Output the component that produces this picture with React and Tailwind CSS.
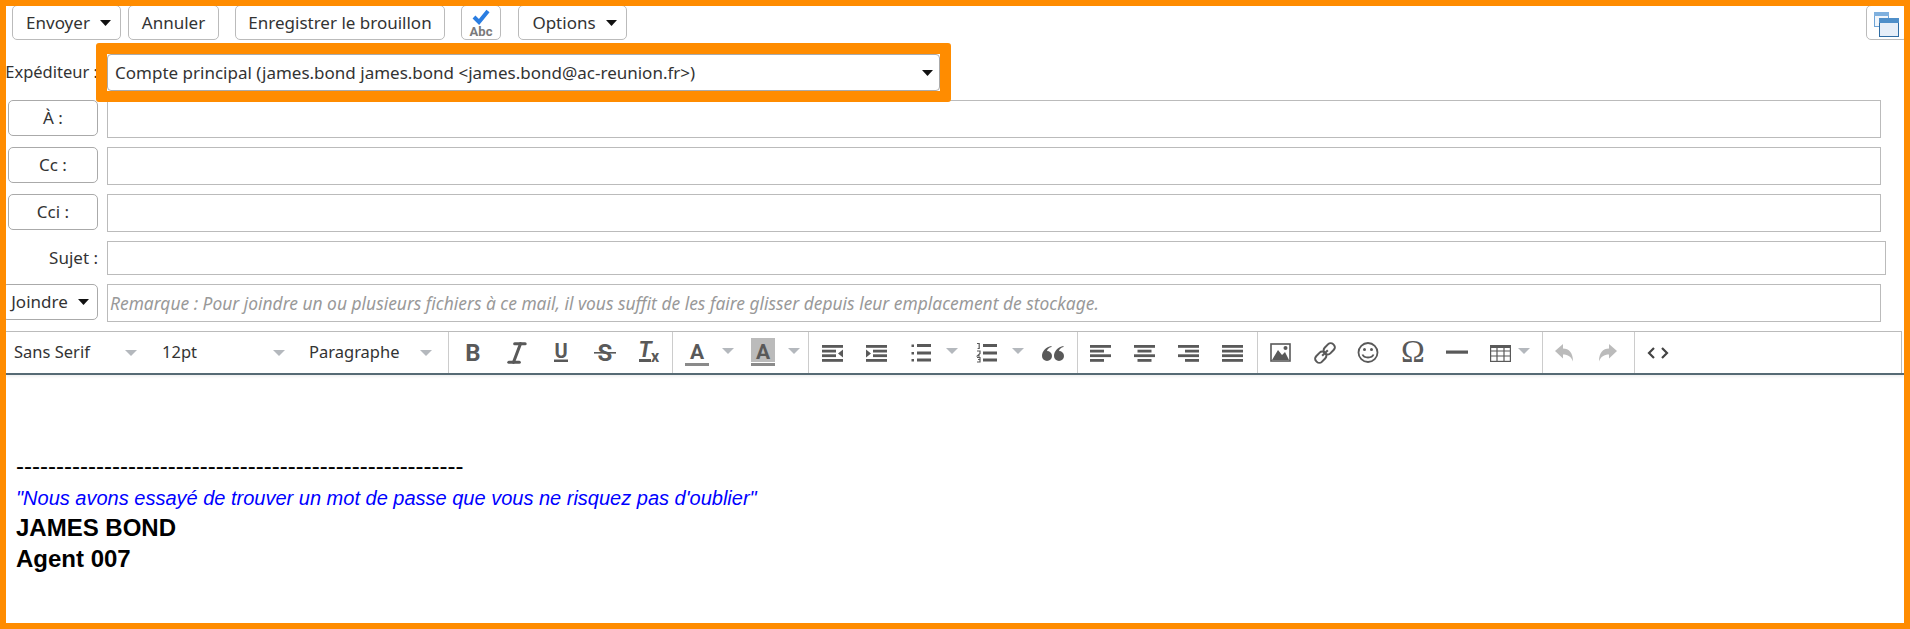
import { Italic } from 'lucide-react'

const INK = '#595959'

function Caret({ color = '#b4b8bd', w = 12, h = 6 }) {
  return (
    <svg width={w} height={h} viewBox="0 0 12 6" preserveAspectRatio="none" className="shrink-0">
      <polygon points="0,0 12,0 6,6" fill={color} />
    </svg>
  )
}

function TopButton({ w, children, className = '' }) {
  return (
    <button className={`${w} ${className} h-[35px] shrink-0 flex items-center justify-center gap-[10px] border border-[#bbbbbb] rounded-[5px] bg-white text-[#333] text-[17px] whitespace-nowrap`}>
      {children}
    </button>
  )
}

function FieldButton({ children }) {
  return (
    <button className="w-[90px] h-[36px] ml-[2px] shrink-0 border border-[#aaaaaa] rounded-[5px] bg-white text-[#333] text-[17px] flex items-center justify-center">
      {children}
    </button>
  )
}

function Row({ label, right = 'mr-[23px]', h = 'h-[38px]', placeholder }) {
  return (
    <div className="flex items-start">
      <div className="w-[92px] shrink-0">{label}</div>
      <div className={`ml-[9px] flex-1 ${h} ${right} border border-[#bbbbbb] flex items-center pl-[2px] italic text-[#999] text-[17.4px]`}>
        {placeholder}
      </div>
    </div>
  )
}

function Drop({ w, pr, children }) {
  return (
    <div className={`${w} ${pr} shrink-0 pl-[8px] flex items-center justify-between text-[#333] text-[16.5px] h-full`}>
      <span>{children}</span>
      <Caret />
    </div>
  )
}

function Group({ className, children }) {
  return <div className={`flex h-full border-l border-[#cccccc] ${className}`}>{children}</div>
}

function Ico({ children }) {
  return (
    <div className="w-[44px] h-full shrink-0 flex justify-center pt-[10px]">
      <svg width="22" height="22" viewBox="0 0 22 22" fill={INK} className="overflow-visible">{children}</svg>
    </div>
  )
}

function CaretBox({ className = '' }) {
  return (
    <div className={`w-[22px] h-full shrink-0 pl-[3px] pt-[16px] ${className}`}>
      <Caret />
    </div>
  )
}

const bars = [3, 7.7, 12.3, 17]

function Align({ rows }) {
  return (
    <Ico>
      {rows.map(([x, w], i) => (
        <rect key={i} x={x} y={bars[i]} width={w} height="2.8" />
      ))}
    </Ico>
  )
}

const quote = 'M9.5 4C4 5 0 9 0 14a5 5 0 0 0 10 0a5 5 0 0 0-5-5c.5-2 2-3.5 4.5-4z'
const arrow = 'M1 9l8-7v4.5c6 0 10 4 10 13c-2-5-5-7-10-7v4z'

function Toolbar() {
  return (
    <div className="border-b-2 border-[#566a74] shadow-[0_2px_2px_#f2f2f2]">
      <div className="mr-[2px] h-[42px] flex border-t border-r border-[#bbbbbb]">
        <Drop w="w-[148px]" pr="pr-[17px]">Sans Serif</Drop>
        <Drop w="w-[147px]" pr="pr-[16px]">12pt</Drop>
        <Drop w="w-[147px]" pr="pr-[16px]">Paragraphe</Drop>

        <Group className="pl-[2px] pr-[1px]">
          <Ico>
            <text x="11" y="19" textAnchor="middle" fontFamily="Roboto" fontWeight="700" fontSize="24">B</text>
          </Ico>
          <div className="w-[44px] h-full shrink-0 flex justify-center pt-[7px]">
            <Italic size={28} color={INK} strokeWidth={2.6} />
          </div>
          <Ico>
            <text x="11" y="16" textAnchor="middle" fontFamily="Roboto" fontWeight="700" fontSize="20">U</text>
            <rect x="4" y="17.5" width="14" height="2.5" />
          </Ico>
          <Ico>
            <text x="11" y="19" textAnchor="middle" fontFamily="Roboto" fontWeight="700" fontSize="24">S</text>
            <rect x="0" y="10" width="22" height="1.6" />
          </Ico>
          <Ico>
            <text x="7" y="15" textAnchor="middle" fontFamily="Roboto" fontWeight="700" fontStyle="italic" fontSize="22">T</text>
            <rect x="1" y="17" width="12" height="3" />
            <text x="17" y="20" textAnchor="middle" fontFamily="Roboto" fontWeight="700" fontSize="16">x</text>
          </Ico>
        </Group>

        <Group className="pl-[2px] pr-[1px]">
          <Ico>
            <text x="11" y="17" textAnchor="middle" fontFamily="Roboto" fontWeight="700" fontSize="21">A</text>
            <rect x="-1" y="21" width="24" height="3" fill="#8a8a8a" />
          </Ico>
          <CaretBox />
          <Ico>
            <rect x="-1" y="-4" width="24" height="24" fill="#bbbbbb" />
            <text x="11" y="17" textAnchor="middle" fontFamily="Roboto" fontWeight="700" fontSize="21">A</text>
            <rect x="-1" y="21" width="24" height="3" fill="#8a8a8a" />
          </Ico>
          <CaretBox />
        </Group>

        <Group className="pl-[2px] pr-[2px]">
          <Ico>
            <rect x="0" y="3" width="21" height="2.8" />
            <rect x="0" y="7.7" width="14" height="2.8" />
            <rect x="0" y="12.3" width="14" height="2.8" />
            <rect x="0" y="17" width="21" height="2.8" />
            <polygon points="21,7.5 16,11.5 21,15.5" />
          </Ico>
          <Ico>
            <rect x="0" y="3" width="21" height="2.8" />
            <rect x="7" y="7.7" width="14" height="2.8" />
            <rect x="7" y="12.3" width="14" height="2.8" />
            <rect x="0" y="17" width="21" height="2.8" />
            <polygon points="0,7.5 5,11.5 0,15.5" />
          </Ico>
          <Ico>
            <rect x="1.5" y="2.5" width="2.5" height="2.5" />
            <rect x="1.5" y="10" width="2.5" height="2.5" />
            <rect x="1.5" y="17" width="2.5" height="2.5" />
            <rect x="7" y="2" width="14" height="3" />
            <rect x="7" y="9.5" width="14" height="3" />
            <rect x="7" y="16.5" width="14" height="3" />
          </Ico>
          <CaretBox />
          <Ico>
            <path d="M1 1.5h2.2v5H1.6M1 9h3v2.5L1.4 14H4M1 15.5h3v2H2M4 17.5v2.5H1" fill="none" stroke={INK} strokeWidth="1.2" />
            <rect x="7" y="2" width="14" height="3" />
            <rect x="7" y="9.5" width="14" height="3" />
            <rect x="7" y="16.5" width="14" height="3" />
          </Ico>
          <CaretBox />
          <Ico>
            <path d={quote} />
            <path d={quote} transform="translate(12 0)" />
          </Ico>
        </Group>

        <Group className="pl-[1px] pr-[2px]">
          <Align rows={[[0, 21], [0, 14], [0, 21], [0, 14]]} />
          <Align rows={[[0, 21], [3.5, 14], [0, 21], [3.5, 14]]} />
          <Align rows={[[0, 21], [7, 14], [0, 21], [7, 14]]} />
          <Align rows={[[0, 21], [0, 21], [0, 21], [0, 21]]} />
        </Group>

        <Group className="pl-[1px] pr-[5px]">
          <Ico>
            <rect x="1" y="2" width="19" height="17" fill="none" stroke={INK} strokeWidth="1.6" />
            <polygon points="2,18 8,8 12,13 15,10 19,18" />
            <circle cx="15.5" cy="6" r="2" />
          </Ico>
          <Ico>
            <g transform="rotate(-45 11 11)" fill="none" stroke={INK} strokeWidth="2">
              <rect x="-1" y="7" width="12" height="8" rx="3.5" />
              <rect x="11" y="7" width="12" height="8" rx="3.5" />
              <path d="M7 11h8" />
            </g>
          </Ico>
          <Ico>
            <circle cx="10" cy="10.5" r="9.5" fill="none" stroke={INK} strokeWidth="1.8" />
            <circle cx="6.5" cy="7.5" r="1.5" />
            <circle cx="13.5" cy="7.5" r="1.5" />
            <path d="M4.5 12.5c1.5 4 9.5 4 11 0" fill="none" stroke={INK} strokeWidth="1.8" />
          </Ico>
          <Ico>
            <text x="11" y="20" textAnchor="middle" fontFamily="Liberation Serif" fontSize="32">Ω</text>
          </Ico>
          <Ico>
            <rect x="0" y="8.5" width="22" height="3.2" />
          </Ico>
          <Ico>
            <g fill="none" stroke={INK} strokeWidth="1.2">
              <rect x=".6" y="3.6" width="19.8" height="15.8" />
              <path d="M.6 9h19.8M.6 14h19.8M7 5v14M14 5v14" />
            </g>
            <rect x="0" y="3" width="21" height="3" />
          </Ico>
          <CaretBox className="ml-[-8px]" />
        </Group>

        <Group className="pr-[3px]">
          <Ico>
            <path d={arrow} fill="#bbbbbb" />
          </Ico>
          <Ico>
            <path d={arrow} fill="#bbbbbb" transform="matrix(-1 0 0 1 20 0)" />
          </Ico>
        </Group>

        <Group className="pl-[1px]">
          <Ico>
            <path d="M7 6l-5 5 5 5M15 6l5 5-5 5" fill="none" stroke="#444444" strokeWidth="2.2" />
          </Ico>
        </Group>
      </div>
    </div>
  )
}

export default function App() {
  return (
    <div className="h-screen w-full box-border border-[6px] border-[#ff8c00] bg-white overflow-hidden font-['Noto_Sans',sans-serif]">
      <div className="flex items-start -mt-[1px] pl-[6px]">
        <TopButton w="w-[109px]" className="pl-[4px]">
          Envoyer
          <Caret color="#111111" w={11} h={6} />
        </TopButton>
        <div className="ml-[7px]"><TopButton w="w-[91px]">Annuler</TopButton></div>
        <div className="ml-[16px]"><TopButton w="w-[210px]">Enregistrer le brouillon</TopButton></div>
        <div className="ml-[16px]">
          <TopButton w="w-[40px]">
            <svg width="28" height="30" viewBox="0 0 28 30" className="shrink-0">
              <path d="M7 9l5 5 9-11" fill="none" stroke="#2a7de1" strokeWidth="4" />
              <text x="14" y="28" textAnchor="middle" fontFamily="Roboto" fontWeight="700" fontSize="13" fill="#7a7a7a">Abc</text>
            </svg>
          </TopButton>
        </div>
        <div className="ml-[17px]">
          <TopButton w="w-[109px]" className="pl-[4px]">
            Options
            <Caret color="#111111" w={11} h={6} />
          </TopButton>
        </div>
        <button className="ml-auto -mr-[4px] w-[42px] h-[35px] border border-[#bbbbbb] rounded-[5px] bg-white pl-[7px] pt-[4px] shrink-0">
          <svg width="25" height="25" viewBox="0 0 25 25" className="block">
            <rect x=".5" y=".5" width="14" height="14" fill="#f2f6fb" stroke="#6fa5d8" />
            <rect x="0" y="0" width="15" height="4" fill="#7fb0de" />
            <rect x="5.5" y="6.5" width="19" height="18" fill="#e6eef8" stroke="#2f6ca3" />
            <rect x="5" y="6" width="20" height="5" fill="#4f8fc9" />
          </svg>
        </button>
      </div>

      <div className="flex flex-col gap-[9px] mt-[14px]">
        <div className="flex items-center h-[37px]">
          <div className="w-[92px] shrink-0 flex justify-end text-[#333] text-[16.5px] whitespace-nowrap">Expéditeur :</div>
          <div className="ml-[9px] relative">
            <div className="w-[833px] h-[37px] border border-[#aaaaaa] rounded-[4px] flex items-center justify-between pl-[7px] pr-[6px] text-[#333] text-[17px]">
              <span>Compte principal (james.bond james.bond &lt;james.bond@ac-reunion.fr&gt;)</span>
              <Caret color="#111111" w={11} h={6} />
            </div>
            <div className="absolute -inset-[11px] border-[11px] border-[#ff8c00] rounded-[3px]" />
          </div>
        </div>

        <Row label={<FieldButton>À :</FieldButton>} />
        <Row label={<FieldButton>Cc :</FieldButton>} />
        <Row label={<FieldButton>Cci :</FieldButton>} />
        <Row
          h="h-[34px]"
          right="mr-[18px]"
          label={<div className="h-[34px] flex items-center justify-end text-[#333] text-[17px]">Sujet :</div>}
        />
        <Row
          placeholder="Remarque : Pour joindre un ou plusieurs fichiers à ce mail, il vous suffit de les faire glisser depuis leur emplacement de stockage."
          label={
            <button className="w-[96px] h-[36px] -ml-[4px] border border-[#aaaaaa] rounded-[5px] bg-white text-[#333] text-[17px] flex items-center justify-center gap-[10px] whitespace-nowrap">
              Joindre
              <Caret color="#111111" w={11} h={6} />
            </button>
          }
        />
        <Toolbar />
      </div>

      <div className="pt-[76px] pl-[10px] font-['Liberation_Sans',sans-serif] text-[24px] leading-[30px] text-black">
        <div>--------------------------------------------------------</div>
        <div className="italic text-[#0000ff] text-[20px] mt-[2px]">"Nous avons essayé de trouver un mot de passe que vous ne risquez pas d'oublier"</div>
        <div className="font-bold">JAMES BOND</div>
        <div className="font-bold mt-[1px]">Agent 007</div>
      </div>
    </div>
  )
}
